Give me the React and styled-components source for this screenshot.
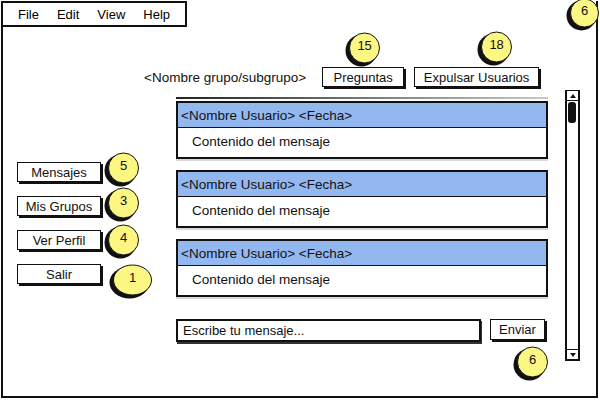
import React from 'react';
import styled, { createGlobalStyle } from 'styled-components';

/* ~~~~~~ Styles ~~~~~~~ */

const GlobalStyle = createGlobalStyle`
  body {
    margin: 0;
    background: #fff;
    font-family: "Liberation Sans", Arial, sans-serif;
    color: #111;
  }
  #root {
    width: 600px;
    height: 400px;
    overflow: hidden;
  }
`;

const Window = styled.div`
  position: relative;
  box-sizing: border-box;
  margin: 1px 0 0 1px;
  width: 597px;
  height: 397px;
  border: 2px solid #111;
  border-top: none;
  display: flex;
  flex-direction: column;
`;

const MenuBar = styled.div`
  box-sizing: border-box;
  width: 184px;
  height: 26px;
  border: 2px solid #111;
  border-left: none;
  display: flex;
  align-items: center;
  gap: 18px;
  padding-left: 15px;
  font-size: 13px;
`;

const MenuItem = styled.span`
  color: #000;
`;

const TopBar = styled.div`
  display: flex;
  align-items: center;
  margin-top: 39px;
  padding-left: 141px;
  height: 22px;
`;

const GroupLabel = styled.span`
  font-size: 13.5px;
  margin-right: 16px;
`;

const Slot = styled.div`
  position: relative;
  margin-right: ${(p) => p.$gap || 0}px;
`;

const Button = styled.div`
  box-sizing: border-box;
  width: ${(p) => p.$w}px;
  height: ${(p) => p.$h || 20}px;
  border: 1.5px solid #111;
  background: #fff;
  box-shadow: 2px 2px 0 #111;
  display: flex;
  align-items: center;
  justify-content: center;
  font-size: 13px;
`;

const Row = styled.div`
  display: flex;
  margin-top: 2px;
`;

const Sidebar = styled.div`
  box-sizing: border-box;
  width: 173px;
  padding: 72px 0 0 14px;
  display: flex;
  flex-direction: column;
  gap: 14px;
`;

const Center = styled.div`
  width: 372px;
  padding-top: 7px;
  display: flex;
  flex-direction: column;
`;

const ListTop = styled.div`
  height: 2px;
  background: linear-gradient(to right, #222, #999 70%, #c8c8c8);
  margin-bottom: 2px;
`;

const Cards = styled.div`
  display: flex;
  flex-direction: column;
  gap: 11px;
`;

const Card = styled.div`
  border: 2px solid #111;
  box-shadow: 0 2px 0 rgba(0, 0, 0, 0.15);
  font-size: 13.5px;
`;

const CardHeader = styled.div`
  height: 24px;
  background: #93b8f0;
  border-bottom: 1px solid #111;
  display: flex;
  align-items: center;
  padding-left: 3px;
`;

const CardBody = styled.div`
  height: 29px;
  background: #fff;
  display: flex;
  align-items: center;
  padding-left: 14px;
  padding-bottom: 3px;
  box-sizing: border-box;
`;

const InputRow = styled.div`
  display: flex;
  align-items: flex-start;
  margin-top: 22px;
  gap: 9px;
`;

const MessageInput = styled.div`
  box-sizing: border-box;
  width: 305px;
  height: 23px;
  border: 2px solid #111;
  box-shadow: 1px 2px 0 #333;
  display: flex;
  align-items: center;
  padding-left: 5px;
  font-size: 13px;
`;

const Scrollbar = styled.div`
  box-sizing: border-box;
  margin-left: 17px;
  width: 15px;
  height: 271px;
  border: 2px solid #111;
  border-top-width: 1.5px;
  display: flex;
  flex-direction: column;
`;

const Arrow = styled.div`
  height: 9px;
  display: flex;
  align-items: center;
  justify-content: center;
  border-${(p) => (p.$down ? 'top' : 'bottom')}: 1.5px solid #111;
  margin-top: ${(p) => (p.$down ? 'auto' : 0)};
  &::after {
    content: '';
    width: 0;
    height: 0;
    border-left: 3.5px solid transparent;
    border-right: 3.5px solid transparent;
    border-${(p) => (p.$down ? 'top' : 'bottom')}: 4px solid #111;
  }
`;

const Thumb = styled.div`
  width: 8px;
  height: 21px;
  margin: 1px 0 0 1px;
  border-radius: 3px;
  background: #111;
`;

const BadgeWrap = styled.div`
  position: absolute;
  left: ${(p) => p.$x}px;
  top: ${(p) => p.$y}px;
  width: ${(p) => p.$w}px;
  height: ${(p) => p.$h}px;
  z-index: 2;
`;

const BadgeNum = styled.span`
  position: absolute;
  left: 3px;
  right: 0;
  top: 22%;
  text-align: center;
  font-size: 13px;
  line-height: 13px;
  color: #111;
`;

/* ~~~~~~ Components ~~~~~~~ */

const Badge = ({ n, x, y, w = 36, h = 36 }) => (
  <BadgeWrap $x={x} $y={y} $w={w} $h={h}>
    <svg width={w} height={h} viewBox={`0 0 ${w} ${h}`}>
      <ellipse cx={w / 2 - 1.5} cy={h / 2 + 1.5} rx={w / 2 - 2} ry={h / 2 - 2} fill="#111" />
      <ellipse
        cx={w / 2 + 1.5}
        cy={h / 2 - 1}
        rx={w / 2 - 3}
        ry={h / 2 - 3}
        fill="#fcf683"
        stroke="#111"
        strokeWidth="1"
      />
    </svg>
    <BadgeNum>{n}</BadgeNum>
  </BadgeWrap>
);

const messages = [1, 2, 3];

const sideButtons = [
  { label: 'Mensajes', n: '5', x: 87, y: -11 },
  { label: 'Mis Grupos', n: '3', x: 87, y: -10 },
  { label: 'Ver Perfil', n: '4', x: 87, y: -7 },
  { label: 'Salir', n: '1', x: 92, y: -1, w: 44, h: 36 }
];

const App = () => (
  <>
    <GlobalStyle />
    <Window>
      <MenuBar>
        <MenuItem>File</MenuItem>
        <MenuItem>Edit</MenuItem>
        <MenuItem>View</MenuItem>
        <MenuItem>Help</MenuItem>
      </MenuBar>
      <Badge n="6" x={563} y={-4} w={34} h={34} />

      <TopBar>
        <GroupLabel>&lt;Nombre grupo/subgrupo&gt;</GroupLabel>
        <Slot $gap={10}>
          <Button $w={82}>Preguntas</Button>
          <Badge n="15" x={23} y={-36} />
        </Slot>
        <Slot>
          <Button $w={125}>Expulsar Usuarios</Button>
          <Badge n="18" x={63} y={-37} />
        </Slot>
      </TopBar>

      <Row>
        <Sidebar>
          {sideButtons.map((b) => (
            <Slot key={b.label}>
              <Button $w={84}>{b.label}</Button>
              <Badge n={b.n} x={b.x} y={b.y} w={b.w} h={b.h} />
            </Slot>
          ))}
        </Sidebar>

        <Center>
          <ListTop />
          <Cards>
            {messages.map((m) => (
              <Card key={m}>
                <CardHeader>&lt;Nombre Usuario&gt; &lt;Fecha&gt;</CardHeader>
                <CardBody>Contenido del mensaje</CardBody>
              </Card>
            ))}
          </Cards>
          <InputRow>
            <MessageInput>Escribe tu mensaje...</MessageInput>
            <Slot>
              <Button $w={55} $h={21}>Enviar</Button>
              <Badge n="6" x={23} y={26} />
            </Slot>
          </InputRow>
        </Center>

        <Scrollbar>
          <Arrow />
          <Thumb />
          <Arrow $down />
        </Scrollbar>
      </Row>
    </Window>
  </>
);

export default App;
